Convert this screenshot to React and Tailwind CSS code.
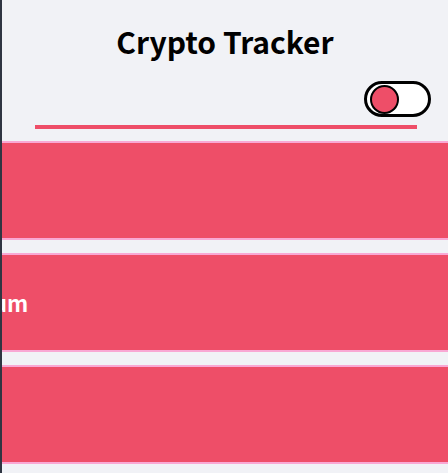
export default function App() {
  const coins = ["Bitcoin", "Ethereum", "Tether"];
  return (
    <div
      className="w-[448px] min-h-[473px] bg-[#f1f2f6] border-l-2 border-[#2f3542] overflow-hidden"
      style={{ fontFamily: '"Noto Sans CJK KR", "Noto Sans", sans-serif' }}
    >
      <h1 className="mt-[20px] h-[42px] text-center text-[30px] font-bold leading-[42px] text-black">
        Crypto Tracker
      </h1>
      <div className="mt-[19px] flex justify-end pr-[17px]">
        <div className="flex h-[36px] w-[67px] items-center rounded-full border-[3px] border-black bg-white pl-[3px]">
          <div className="h-[29px] w-[29px] rounded-full border-2 border-black bg-[#ee4e68]" />
        </div>
      </div>
      <div className="ml-[33px] mt-[8px] h-[4px] w-[382px] bg-[#ee4e68]" />
      <div className="mt-[12px] flex flex-col gap-[13px]">
        {coins.map((c) => (
          <div
            key={c}
            className="-ml-[120px] flex h-[99px] w-[700px] items-center border-y-2 border-[#f9a8d4] bg-[#ee4e68] pl-[40px]"
          >
            <span className="text-[22px] font-bold text-white">{c}</span>
          </div>
        ))}
      </div>
    </div>
  );
}
